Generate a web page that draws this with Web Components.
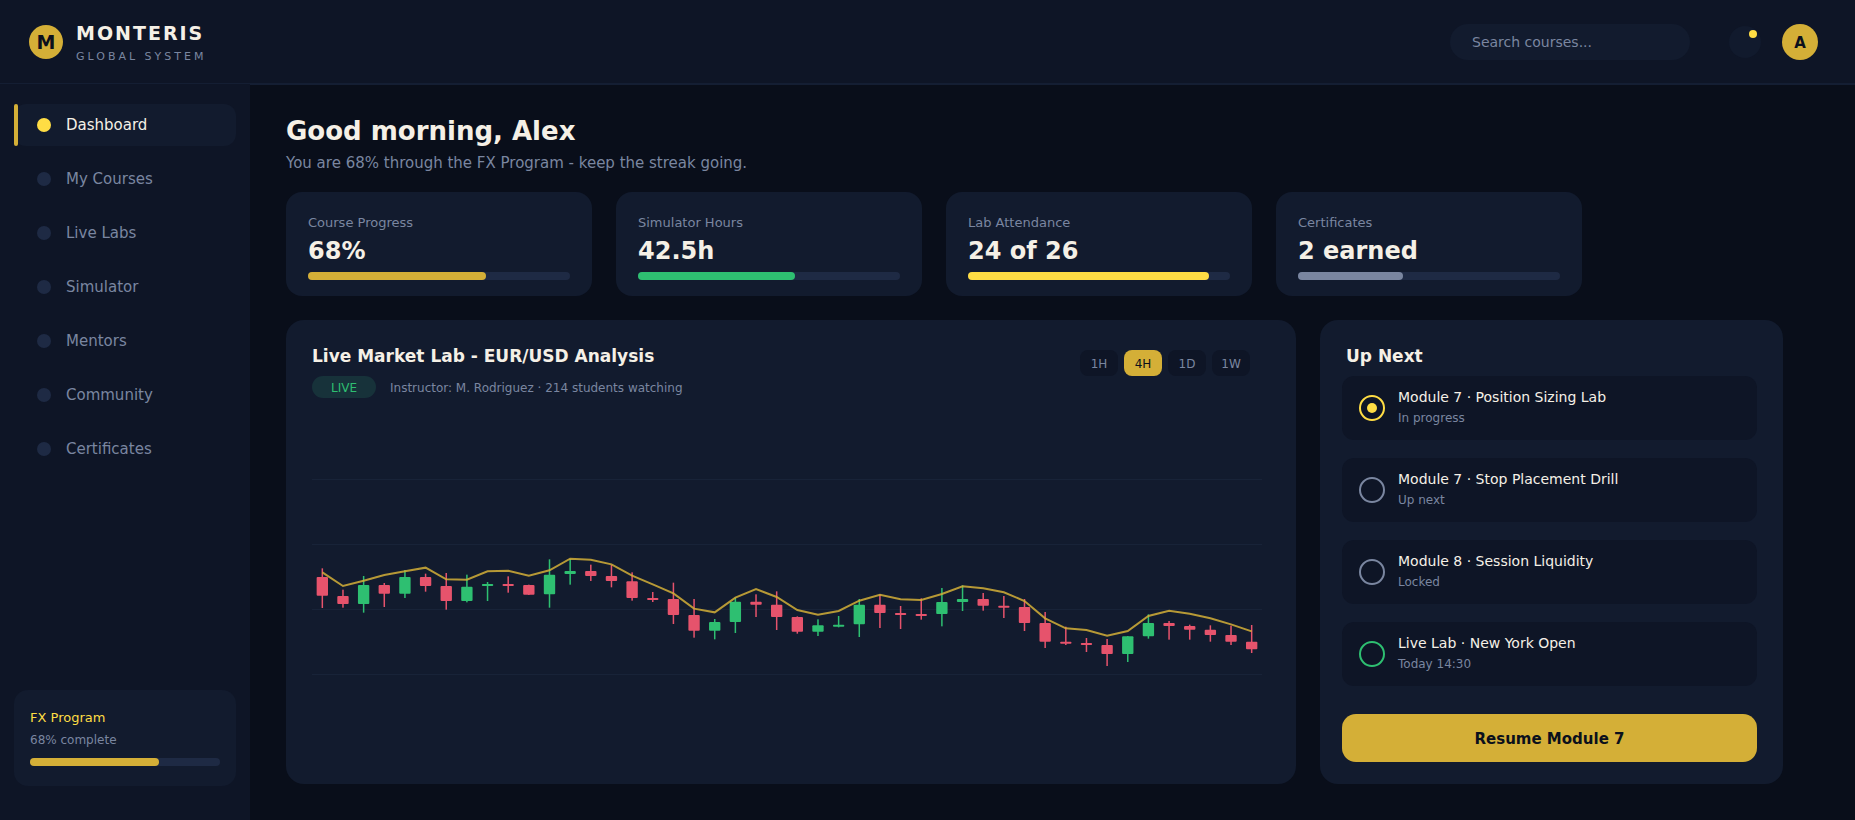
<!DOCTYPE html>
<html lang="en">
<head>
<meta charset="utf-8">
<title>Monteris Global System</title>
<style>
  :root {
    --bg: #090e1a;
    --surface: #0e1526;
    --card: #121b2e;
    --track: #1e2a44;
    --gold: #d4af37;
    --yellow: #ffdd44;
    --green: #2ebf71;
    --red: #e6536c;
    --text: #f5f0e6;
    --muted: #7a86a0;
    --ink: #0b101c;
  }
  body {
    margin: 0;
    background: var(--bg);
    color: var(--text);
    font: 15px/18px "DejaVu Sans", sans-serif;
  }
</style>
</head>
<body>
<course-dashboard></course-dashboard>

<script>
/* Attach an open shadow root holding the given markup */
function render(host, html) {
    const shadow = host.attachShadow({ mode: "open" });
    shadow.innerHTML = html;
    return shadow;
}

/**
 * A rounded progress bar, value in percent
 */
customElements.define("progress-bar", class ProgressBar extends HTMLElement {
    constructor() {
	super();
	const shadow = render(this, `
<style>
  :host {
    display: block;
    height: 8px;
    border-radius: 4px;
    background: var(--track);
  }
  div {
    height: 8px;
    border-radius: 4px;
    background: var(--bar-color, var(--gold));
  }
</style>
<div></div>
`);
	this.fill = shadow.querySelector('div');
    }

    connectedCallback() {
	this.fill.style.width = this.getAttribute("value") + '%';
    }
});

customElements.define("app-header", class AppHeader extends HTMLElement {
    constructor() {
	super();
	render(this, `
<style>
  :host {
    display: flex;
    box-sizing: border-box;
    height: 85px;
    padding: 0 37px 0 29px;
    background: var(--surface);
    border-bottom: 2px solid #141e33;
  }
  .logo, .avatar {
    border-radius: 50%;
    background: var(--gold);
    color: var(--ink);
    font-weight: bold;
    text-align: center;
  }
  .logo {
    width: 34px;
    height: 34px;
    margin-top: 25px;
    font-size: 19px;
    line-height: 34px;
  }
  .brand {
    flex: 1;
    padding: 22px 0 0 13px;
  }
  .name {
    font-size: 19px;
    font-weight: bold;
    line-height: 22px;
    letter-spacing: 2px;
  }
  .tagline {
    margin-top: 6px;
    color: var(--muted);
    font-size: 11px;
    line-height: 13px;
    letter-spacing: 3px;
  }
  .search {
    box-sizing: border-box;
    width: 240px;
    height: 36px;
    margin: 24px 39px 0 0;
    padding-left: 22px;
    border-radius: 18px;
    background: var(--card);
    color: var(--muted);
    font-size: 14px;
    line-height: 36px;
  }
  .bell {
    position: relative;
    width: 32px;
    height: 32px;
    margin: 26px 21px 0 0;
    border-radius: 50%;
    background: #111a2d;
  }
  .bell i {
    position: absolute;
    top: 4px;
    left: 20px;
    width: 8px;
    height: 8px;
    border-radius: 50%;
    background: var(--yellow);
  }
  .avatar {
    width: 36px;
    height: 36px;
    margin-top: 24px;
    font-size: 15px;
    line-height: 38px;
  }
</style>
<div class="logo">M</div>
<div class="brand">
  <div class="name">MONTERIS</div>
  <div class="tagline">GLOBAL SYSTEM</div>
</div>
<div class="search">Search courses...</div>
<div class="bell"><i></i></div>
<div class="avatar">A</div>
`);
    }
});

customElements.define("nav-item", class NavItem extends HTMLElement {
    constructor() {
	super();
	render(this, `
<style>
  :host {
    display: flex;
    align-items: center;
    box-sizing: border-box;
    height: 42px;
    border-radius: 12px;
    color: var(--muted);
  }
  :host([active]) {
    background: var(--card);
    color: var(--text);
  }
  .mark {
    width: 4px;
    height: 42px;
    border-radius: 2px;
  }
  .dot {
    width: 14px;
    height: 14px;
    margin: 0 15px 0 19px;
    border-radius: 50%;
    background: var(--track);
  }
  :host([active]) .mark { background: var(--gold); }
  :host([active]) .dot { background: var(--yellow); }
</style>
<span class="mark"></span>
<span class="dot"></span>
<slot></slot>
`);
    }
});

customElements.define("side-nav", class SideNav extends HTMLElement {
    constructor() {
	super();
	render(this, `
<style>
  :host {
    display: flex;
    flex-direction: column;
    justify-content: space-between;
    box-sizing: border-box;
    padding: 20px 14px 34px;
    background: var(--surface);
  }
  nav {
    display: grid;
    gap: 12px;
  }
  .program {
    box-sizing: border-box;
    height: 96px;
    padding: 20px 16px 0;
    border-radius: 14px;
    background: var(--card);
  }
  .title {
    color: var(--yellow);
    font-size: 13px;
    line-height: 15px;
  }
  .note {
    margin: 8px 0 11px;
    color: var(--muted);
    font-size: 12px;
    line-height: 14px;
  }
</style>
<nav><slot></slot></nav>
<div class="program">
  <div class="title">FX Program</div>
  <div class="note">68% complete</div>
  <progress-bar value="68"></progress-bar>
</div>
`);
    }
});

customElements.define("stat-card", class StatCard extends HTMLElement {
    constructor() {
	super();
	this.shadow = render(this, `
<style>
  :host {
    display: block;
    box-sizing: border-box;
    height: 104px;
    padding: 23px 22px 0;
    border-radius: 16px;
    background: var(--card);
  }
  .label {
    color: var(--muted);
    font-size: 13px;
    line-height: 15px;
  }
  .value {
    margin: 7px 0;
    font-size: 24px;
    font-weight: bold;
    line-height: 28px;
  }
</style>
<div class="label"></div>
<div class="value"><slot></slot></div>
<progress-bar value="${this.getAttribute("progress")}"></progress-bar>
`);
	this.shadow.querySelector('.label').textContent = this.getAttribute("label");
    }
});

/**
 * Candlestick chart with a moving average line
 */
customElements.define("candle-chart", class CandleChart extends HTMLElement {
    constructor() {
	super();
	const shadow = render(this, `
<style>
  :host {
    display: block;
    width: ${this.width}px;
    height: ${this.height}px;
  }
  svg { display: block; }
  .grid { fill: #182338; }
  .up { fill: var(--green); }
  .down { fill: var(--red); }
  .average {
    fill: none;
    stroke: var(--gold);
    stroke-width: 2;
    opacity: .85;
  }
</style>
<svg viewBox="0 0 ${this.width} ${this.height}" width="${this.width}" height="${this.height}"></svg>
`);
	this.svg = shadow.querySelector('svg');
    }

    connectedCallback() {
	this.draw();
    }

    get width() {
	return 950;
    }

    get height() {
	return 330;
    }

    // direction, high, body top, body bottom, low, average
    // in thirds of a pixel below the chart's base level
    get candles() {
	return [
	    ['down', 85, 111, 167, 204, 97],
	    ['down', 149, 168, 192, 203, 138],
	    ['up', 108, 135, 192, 218, 122],
	    ['down', 129, 135, 161, 201, 105],
	    ['up', 90, 111, 161, 174, 94],
	    ['down', 101, 111, 138, 155, 83],
	    ['down', 99, 138, 183, 209, 118],
	    ['up', 104, 140, 183, 187, 119],
	    ['up', 126, 132, 138, 183, 94],
	    ['down', 109, 132, 138, 158, 92],
	    ['down', 134, 135, 164, 165, 107],
	    ['up', 58, 104, 163, 203, 91],
	    ['up', 57, 93, 102, 134, 56],
	    ['down', 74, 93, 108, 123, 59],
	    ['down', 75, 108, 123, 142, 73],
	    ['down', 97, 124, 174, 182, 107],
	    ['down', 156, 174, 180, 186, 133],
	    ['down', 128, 177, 225, 252, 160],
	    ['down', 177, 225, 272, 293, 206],
	    ['up', 237, 246, 272, 298, 217],
	    ['up', 173, 185, 246, 279, 173],
	    ['down', 163, 185, 194, 231, 147],
	    ['down', 154, 194, 231, 270, 171],
	    ['down', 229, 231, 275, 281, 210],
	    ['up', 238, 256, 275, 288, 224],
	    ['up', 228, 254, 260, 262, 213],
	    ['up', 177, 194, 253, 291, 182],
	    ['down', 163, 194, 219, 264, 164],
	    ['down', 198, 219, 225, 267, 178],
	    ['down', 175, 222, 228, 239, 180],
	    ['up', 144, 186, 222, 259, 162],
	    ['up', 136, 177, 186, 213, 139],
	    ['down', 159, 177, 197, 212, 145],
	    ['down', 168, 197, 203, 234, 157],
	    ['down', 177, 201, 249, 273, 183],
	    ['down', 216, 249, 305, 324, 235],
	    ['down', 260, 305, 311, 315, 265],
	    ['down', 294, 309, 315, 336, 270],
	    ['down', 297, 315, 342, 378, 287],
	    ['up', 288, 289, 342, 366, 273],
	    ['up', 223, 249, 289, 296, 228],
	    ['down', 243, 249, 258, 299, 212],
	    ['down', 254, 258, 269, 299, 221],
	    ['down', 256, 269, 285, 305, 235],
	    ['down', 257, 285, 305, 315, 253],
	    ['down', 255, 305, 328, 339, 274]
	];
    }

    draw() {
	const data = this.candles,
	      step = this.width / data.length,
	      barw = step * 0.55,
	      px = t => 120 + t / 3;
	let html = '', points = [];

	for (const y of [59, 124, 189, 254])
	    html += `<rect class="grid" x="0" y="${y}" width="${this.width}" height="1" />`;

	data.forEach(([dir, high, top, bottom, low, avg], i) => {
	    const x = step * (i + 0.5);
	    html += `<g class="${dir}">
<rect x="${x - 0.75}" y="${px(high)}" width="1.5" height="${(low - high) / 3}" />
<rect x="${x - barw/2}" y="${px(top)}" width="${barw}" height="${(bottom - top) / 3}" rx="1" />
</g>`;
	    points.push(`${x},${px(avg)}`);
	});
	html += `<polyline class="average" points="${points.join(' ')}" />`;
	this.svg.innerHTML = html;
    }
});

customElements.define("market-lab", class MarketLab extends HTMLElement {
    constructor() {
	super();
	render(this, `
<style>
  :host {
    display: block;
    box-sizing: border-box;
    padding: 26px 0 0 26px;
    border-radius: 18px;
    background: var(--card);
  }
  header {
    display: flex;
    justify-content: space-between;
    padding-right: 46px;
    height: 74px;
  }
  h2 {
    margin: 0 0 10px;
    font-size: 17px;
    line-height: 20px;
  }
  .meta {
    display: flex;
    gap: 14px;
    color: var(--muted);
    font-size: 12px;
    line-height: 24px;
  }
  .live {
    width: 64px;
    height: 22px;
    border-radius: 11px;
    background: #17323a;
    color: var(--green);
    text-align: center;
  }
  .ranges {
    display: flex;
    gap: 6px;
    margin-top: 4px;
  }
  .ranges span {
    width: 38px;
    height: 26px;
    border-radius: 8px;
    background: var(--surface);
    color: var(--muted);
    font-size: 12px;
    line-height: 28px;
    text-align: center;
  }
  .ranges .on {
    background: var(--gold);
    color: var(--ink);
  }
</style>
<header>
  <div>
    <h2>Live Market Lab - EUR/USD Analysis</h2>
    <div class="meta">
      <span class="live">LIVE</span>
      <span>Instructor: M. Rodriguez · 214 students watching</span>
    </div>
  </div>
  <div class="ranges">
    <span>1H</span><span class="on">4H</span><span>1D</span><span>1W</span>
  </div>
</header>
<candle-chart></candle-chart>
`);
    }
});

customElements.define("lesson-item", class LessonItem extends HTMLElement {
    constructor() {
	super();
	render(this, `
<style>
  :host {
    display: flex;
    box-sizing: border-box;
    height: 64px;
    padding: 13px 17px 0;
    border-radius: 12px;
    background: var(--surface);
    font-size: 14px;
    line-height: 16px;
    --ring: var(--muted);
  }
  :host([state=current]) { --ring: var(--yellow); }
  :host([state=live]) { --ring: var(--green); }
  svg {
    flex: none;
    width: 26px;
    height: 26px;
    margin: 6px 13px 0 0;
  }
  circle {
    fill: none;
    stroke: var(--ring);
    stroke-width: 2;
  }
  .inner { display: none; }
  :host([state=current]) .inner {
    display: inline;
    fill: var(--ring);
    stroke: none;
  }
  .status {
    margin-top: 6px;
    color: var(--muted);
    font-size: 12px;
    line-height: 14px;
  }
</style>
<svg viewBox="0 0 26 26">
  <circle cx="13" cy="13" r="12" />
  <circle class="inner" cx="13" cy="13" r="5" />
</svg>
<div>
  <slot></slot>
  <div class="status"><slot name="status"></slot></div>
</div>
`);
    }
});

customElements.define("up-next", class UpNext extends HTMLElement {
    constructor() {
	super();
	render(this, `
<style>
  :host {
    display: block;
    box-sizing: border-box;
    padding: 26px 26px 22px 22px;
    border-radius: 18px;
    background: var(--card);
  }
  h2 {
    margin: 0 0 10px 4px;
    font-size: 17px;
    line-height: 20px;
  }
  .list {
    display: grid;
    gap: 18px;
  }
  button {
    display: block;
    width: 100%;
    height: 48px;
    margin-top: 28px;
    padding: 2px 0 0;
    border: 0;
    border-radius: 14px;
    background: var(--gold);
    color: var(--ink);
    font: bold 15px/18px "DejaVu Sans", sans-serif;
  }
</style>
<h2>Up Next</h2>
<div class="list"><slot></slot></div>
<button>Resume Module 7</button>
`);
    }
});

customElements.define("course-dashboard", class CourseDashboard extends HTMLElement {
    constructor() {
	super();
	render(this, `
<style>
  :host {
    display: grid;
    grid-template: 85px 735px / 250px 1fr;
    height: 820px;
    overflow: hidden;
  }
  app-header { grid-column: 1 / 3; }
  side-nav {
    margin-top: -1px;
    z-index: 1;
  }
  main {
    padding: 31px 72px 0 36px;
  }
  h1 {
    margin: 0;
    font-size: 26px;
    line-height: 30px;
  }
  p {
    margin: 8px 0 20px;
    color: var(--muted);
  }
  .stats {
    display: grid;
    grid-template-columns: repeat(4, 306px);
    gap: 24px;
  }
  .panels {
    display: grid;
    grid-template: 464px / 1010px 1fr;
    gap: 24px;
    margin-top: 24px;
  }
</style>
<app-header></app-header>
<side-nav>
  <nav-item active>Dashboard</nav-item>
  <nav-item>My Courses</nav-item>
  <nav-item>Live Labs</nav-item>
  <nav-item>Simulator</nav-item>
  <nav-item>Mentors</nav-item>
  <nav-item>Community</nav-item>
  <nav-item>Certificates</nav-item>
</side-nav>
<main>
  <h1>Good morning, Alex</h1>
  <p>You are 68% through the FX Program - keep the streak going.</p>
  <div class="stats">
    <stat-card label="Course Progress" progress="68">68%</stat-card>
    <stat-card label="Simulator Hours" progress="60" style="--bar-color: var(--green)">42.5h</stat-card>
    <stat-card label="Lab Attendance" progress="92" style="--bar-color: var(--yellow)">24 of 26</stat-card>
    <stat-card label="Certificates" progress="40" style="--bar-color: var(--muted)">2 earned</stat-card>
  </div>
  <div class="panels">
    <market-lab></market-lab>
    <up-next>
      <lesson-item state="current">Module 7 · Position Sizing Lab<span slot="status">In progress</span></lesson-item>
      <lesson-item>Module 7 · Stop Placement Drill<span slot="status">Up next</span></lesson-item>
      <lesson-item>Module 8 · Session Liquidity<span slot="status">Locked</span></lesson-item>
      <lesson-item state="live">Live Lab · New York Open<span slot="status">Today 14:30</span></lesson-item>
    </up-next>
  </div>
</main>
`);
    }
});
</script>
</body>
</html>
